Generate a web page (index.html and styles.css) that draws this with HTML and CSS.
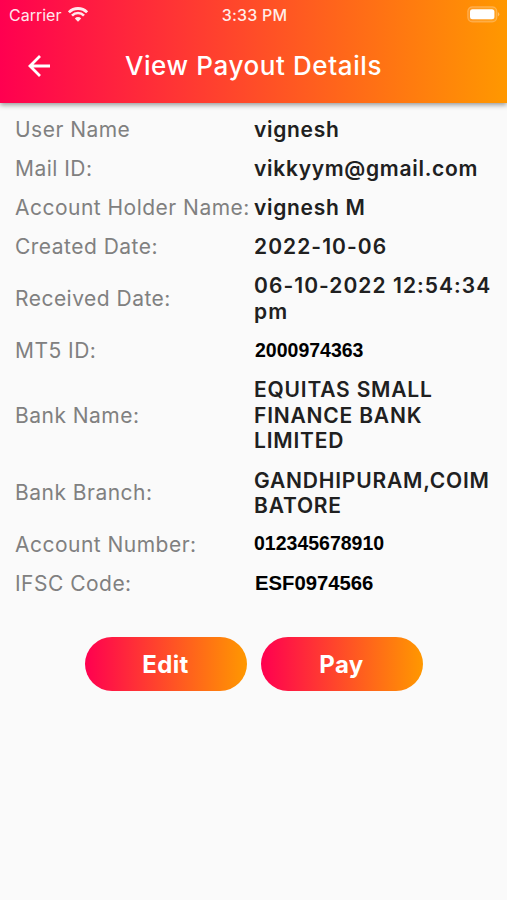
FILE: index.html
```html
<!DOCTYPE html>
<html lang="en">
<head>
    <meta charset="UTF-8">
    <meta name="viewport" content="width=device-width, initial-scale=1.0">
    <title>View Payout Details</title>
    <link rel="stylesheet" href="styles.css">
</head>
<body>
    <header class="header">
        <div class="status-bar">
            <div class="carrier">
                <span>Carrier</span>
                <svg class="wifi" width="20" height="15" viewBox="0 0 20 15">
                    <path d="M0.9 5.3 A12.8 12.8 0 0 1 19.1 5.3" fill="none" stroke="#fff" stroke-width="2.8"/>
                    <path d="M4 8.6 A8.3 8.3 0 0 1 16 8.6" fill="none" stroke="#fff" stroke-width="2.6"/>
                    <path d="M6.8 11.5 A4.4 4.4 0 0 1 13.2 11.5 L10 14.8 Z" fill="#fff"/>
                </svg>
            </div>
            <span class="time">3:33 PM</span>
            <svg class="battery" width="34" height="17" viewBox="0 0 34 17">
                <rect x="1.8" y="0.8" width="29" height="15" rx="4.5" fill="#fff" fill-opacity="0.12" stroke="#fff" stroke-opacity="0.25" stroke-width="1.2"/>
                <rect x="4" y="3.2" width="24.4" height="10" rx="2.5" fill="#fff"/>
                <path d="M31.9 6 Q33.3 6.8 33.3 8.3 Q33.3 9.8 31.9 10.6 Z" fill="#fff" fill-opacity="0.4"/>
            </svg>
        </div>
        <div class="nav-bar">
            <button class="back-btn" aria-label="Back">
                <svg width="22" height="22" viewBox="0 0 22 22">
                    <path d="M22 11 H2 M12 1.1 L2 11 L12 20.9" fill="none" stroke="#fff" stroke-width="2.8"/>
                </svg>
            </button>
            <h1 class="title">View Payout Details</h1>
        </div>
    </header>

    <main class="details">
        <div class="row"><span class="label">User Name</span><span class="value">vignesh</span></div>
        <div class="row"><span class="label">Mail ID:</span><span class="value">vikkyym@gmail.com</span></div>
        <div class="row"><span class="label">Account Holder Name:</span><span class="value">vignesh M</span></div>
        <div class="row"><span class="label">Created Date:</span><span class="value date">2022-10-06</span></div>
        <div class="row"><span class="label">Received Date:</span><span class="value date">06-10-2022 12:54:34 pm</span></div>
        <div class="row"><span class="label">MT5 ID:</span><span class="value plain mt5">2000974363</span></div>
        <div class="row"><span class="label">Bank Name:</span><span class="value bank">EQUITAS SMALL FINANCE BANK LIMITED</span></div>
        <div class="row"><span class="label">Bank Branch:</span><span class="value bank">GANDHIPURAM,COIM<br>BATORE</span></div>
        <div class="row"><span class="label">Account Number:</span><span class="value plain account">012345678910</span></div>
        <div class="row"><span class="label">IFSC Code:</span><span class="value plain code">ESF0974566</span></div>
    </main>

    <div class="actions">
        <button class="btn">Edit</button>
        <button class="btn">Pay</button>
    </div>
</body>
</html>
```
FILE: styles.css
```css
* {
    box-sizing: border-box;
}
body {
    margin: 0;
    min-height: 900px;
    background: #fafafa;
    font-family: Inter, "Liberation Sans", sans-serif;
}
button {
    border: none;
    padding: 0;
    font-family: inherit;
    cursor: pointer;
}
.header {
    height: 103px;
    background: linear-gradient(to right, #ff0050, #ff9800);
    box-shadow: 0 2px 5px rgba(0, 0, 0, 0.4);
    color: #fff;
}
.status-bar {
    display: grid;
    grid-template-columns: 1fr auto 1fr;
    align-items: center;
    height: 29px;
    padding: 0 7px 0 9px;
    font-size: 16px;
}
.carrier {
    display: flex;
    align-items: center;
    gap: 7px;
    opacity: 0.9;
}
.time {
    font-size: 16px;
    font-weight: 500;
    letter-spacing: 0.2px;
    opacity: 0.9;
}
.battery {
    justify-self: end;
}
.nav-bar {
    display: grid;
    grid-template-columns: 78px 1fr 78px;
    align-items: center;
    height: 73px;
}
.back-btn {
    display: flex;
    justify-content: center;
    background: none;
}
.title {
    margin: 0;
    font-size: 26px;
    font-weight: 500;
    letter-spacing: 0.6px;
    text-align: center;
    white-space: nowrap;
}
.details {
    padding: 7.4px 12px 0 15px;
}
.row {
    display: grid;
    grid-template-columns: 239px 1fr;
    align-items: center;
    padding: 6.65px 0;
    font-size: 21px;
    line-height: 25.75px;
}
.label {
    color: #808080;
    font-weight: 420;
    letter-spacing: 0.48px;
    white-space: nowrap;
}
.value {
    color: #202020;
    font-weight: 600;
    letter-spacing: 0.7px;
}
.date {
    letter-spacing: 1.05px;
}
.bank {
    letter-spacing: 0.8px;
}
.plain {
    color: #000;
    font-family: "Liberation Sans", Arial, sans-serif;
    font-size: 19.5px;
    font-weight: 700;
    letter-spacing: 0;
}
.mt5 {
    padding-left: 1px;
}
.account {
    margin-top: -2px;
}
.code {
    padding-left: 1px;
    font-size: 20.3px;
}
.actions {
    display: flex;
    justify-content: center;
    gap: 14px;
    padding-top: 33.6px;
}
.btn {
    width: 162px;
    height: 54px;
    border-radius: 27px;
    background: linear-gradient(to right, #ff0050, #ff9800);
    color: #fff;
    font-size: 24px;
    font-weight: 700;
    letter-spacing: 0.4px;
}
```
